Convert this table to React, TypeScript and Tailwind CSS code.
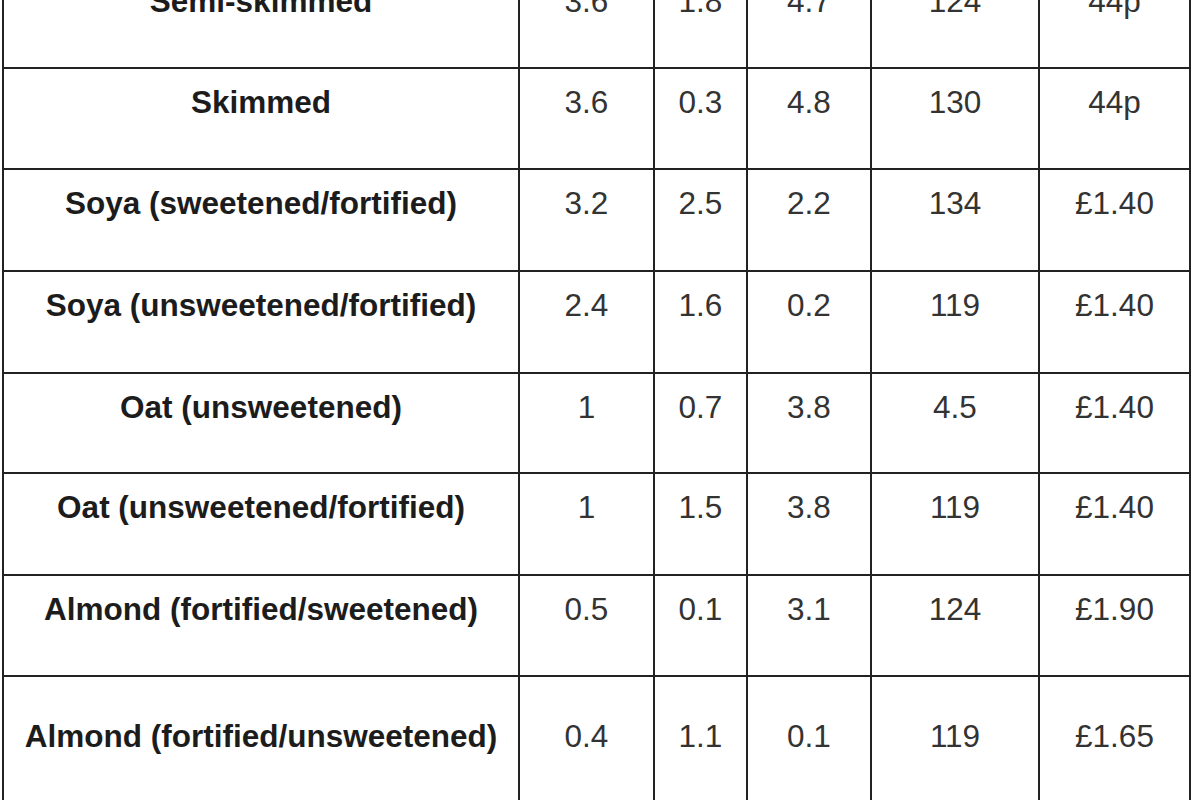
import React from 'react';

type Row = {
  name: string;
  values: string[];
};

const rows: Row[] = [
  { name: 'Semi-skimmed', values: ['3.6', '1.8', '4.7', '124', '44p'] },
  { name: 'Skimmed', values: ['3.6', '0.3', '4.8', '130', '44p'] },
  { name: 'Soya (sweetened/fortified)', values: ['3.2', '2.5', '2.2', '134', '£1.40'] },
  { name: 'Soya (unsweetened/fortified)', values: ['2.4', '1.6', '0.2', '119', '£1.40'] },
  { name: 'Oat (unsweetened)', values: ['1', '0.7', '3.8', '4.5', '£1.40'] },
  { name: 'Oat (unsweetened/fortified)', values: ['1', '1.5', '3.8', '119', '£1.40'] },
  { name: 'Almond (fortified/sweetened)', values: ['0.5', '0.1', '3.1', '124', '£1.90'] },
  { name: 'Almond (fortified/unsweetened)', values: ['0.4', '1.1', '0.1', '119', '£1.65'] },
];

// row heights of the white cells, in px (the grid gap draws the 2px lines)
const heights = ['h-[99px]', 'h-[99px]', 'h-[100px]', 'h-[100px]', 'h-[98px]', 'h-[100px]', 'h-[99px]', 'h-[160px]'];

const App: React.FC = () => {
  return (
    <div className="h-[800px] w-[1200px] overflow-hidden bg-white" style={{ fontFamily: '"Liberation Sans", Arial, sans-serif' }}>
      <div className="ml-[2px] mt-[-34px] grid w-[1189px] grid-cols-[514px_133px_91px_122px_166px_149px] gap-[2px] bg-[#222] p-[2px]">
        {rows.map((row, i) => {
          const last = i === rows.length - 1;
          const pad = last ? 'pt-[41px]' : 'pt-[15px]';
          return (
            <React.Fragment key={row.name}>
              <div className={`${heights[i]} ${pad} bg-white text-center text-[31.5px] font-bold leading-[36px] text-[#1c1c1c]`}>
                {row.name}
              </div>
              {row.values.map((v, j) => (
                <div
                  key={j}
                  className={`${heights[i]} ${pad} bg-white text-center text-[31.5px] leading-[36px] text-[#333]`}
                >
                  {v}
                </div>
              ))}
            </React.Fragment>
          );
        })}
      </div>
    </div>
  );
};

export default App;
